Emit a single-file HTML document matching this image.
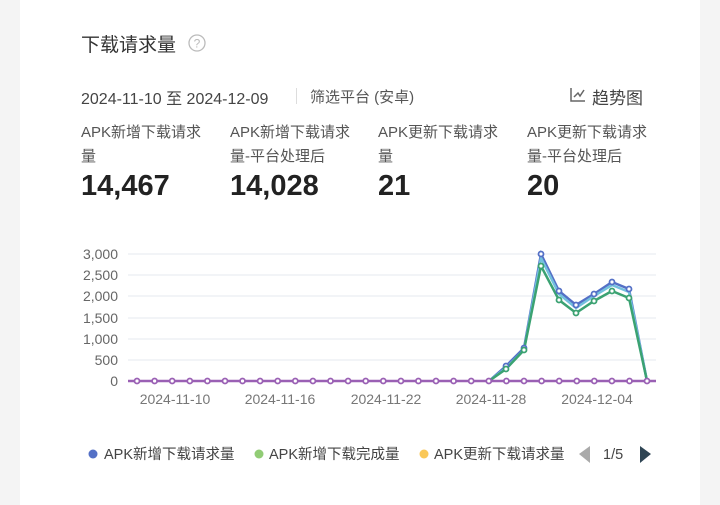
<!DOCTYPE html>
<html><head><meta charset="utf-8"><style>
body{margin:0;width:720px;height:505px;background:#f4f4f4;font-family:"Liberation Sans","Noto Sans CJK SC",sans-serif;overflow:hidden;position:relative}
.card{position:absolute;left:20px;top:0;width:680px;height:505px;background:#fff}
.t{position:absolute;white-space:nowrap}
</style></head><body>
<div class="card"></div>
<div class="t" style="left:81px;top:30px;font-size:19px;color:#333">下载请求量</div>
<svg class="t" style="left:187px;top:33px" width="20" height="20"><circle cx="10" cy="10" r="8" fill="none" stroke="#bbb" stroke-width="1.3"/><text x="10" y="14.5" font-size="12" text-anchor="middle" fill="#bbb" font-family="Liberation Sans">?</text></svg>
<div class="t" style="left:81px;top:85px;font-size:16px;color:#444">2024-11-10 至 2024-12-09</div>
<div class="t" style="left:296px;top:88px;width:1px;height:16px;background:#ddd"></div>
<div class="t" style="left:310px;top:86px;font-size:15px;color:#555">筛选平台 (安卓)</div>
<svg class="t" style="left:569px;top:86px" width="18" height="18"><path d="M2 2V15H16M5 11L9 7L11 10L15 4" fill="none" stroke="#666" stroke-width="1.5"/></svg>
<div class="t" style="left:592px;top:84px;font-size:17px;color:#444">趋势图</div>
<div class="t" style="left:81px;top:121px;font-size:15px;color:#555;line-height:24px">APK新增下载请求<br>量</div>
<div class="t" style="left:230px;top:121px;font-size:15px;color:#555;line-height:24px">APK新增下载请求<br>量-平台处理后</div>
<div class="t" style="left:378px;top:121px;font-size:15px;color:#555;line-height:24px">APK更新下载请求<br>量</div>
<div class="t" style="left:527px;top:121px;font-size:15px;color:#555;line-height:24px">APK更新下载请求<br>量-平台处理后</div>
<div class="t" style="left:81px;top:170px;font-size:29px;font-weight:bold;color:#222">14,467</div>
<div class="t" style="left:230px;top:170px;font-size:29px;font-weight:bold;color:#222">14,028</div>
<div class="t" style="left:378px;top:170px;font-size:29px;font-weight:bold;color:#222">21</div>
<div class="t" style="left:527px;top:170px;font-size:29px;font-weight:bold;color:#222">20</div>
<svg class="t" style="left:0;top:0" width="720" height="505" font-family="Liberation Sans" font-size="14">
<g stroke="#e6e8ef" stroke-width="1"><line x1="128" x2="656" y1="254" y2="254"/><line x1="128" x2="656" y1="275" y2="275"/><line x1="128" x2="656" y1="296" y2="296"/><line x1="128" x2="656" y1="318" y2="318"/><line x1="128" x2="656" y1="339" y2="339"/><line x1="128" x2="656" y1="360" y2="360"/></g>
<g fill="#666" text-anchor="end"><text x="118" y="259">3,000</text><text x="118" y="280">2,500</text><text x="118" y="301">2,000</text><text x="118" y="323">1,500</text><text x="118" y="344">1,000</text><text x="118" y="365">500</text><text x="118" y="386">0</text></g>
<g fill="#777" text-anchor="middle"><text x="175" y="404">2024-11-10</text><text x="280" y="404">2024-11-16</text><text x="386" y="404">2024-11-22</text><text x="491" y="404">2024-11-28</text><text x="597" y="404">2024-12-04</text></g>
<g fill="none" stroke-width="2.5">
<polyline stroke="#5470c6" points="489,381 506,366 524,348 541,254 559,291 576,305 594,294 612,282 629,289 647,381"/>
<polyline stroke="#73c0de" points="489,381 506,368 524,350 541,258 559,294 576,308 594,296 612,285 629,292 647,381"/>
<polyline stroke="#3ba272" points="489,381 506,369 524,350 541,266 559,300 576,313 594,301 612,291 629,298 647,381"/>
</g>
<g fill="#fff" stroke-width="1.8">
<g stroke="#5470c6"><circle cx="541" cy="254" r="2.5"/><circle cx="559" cy="291" r="2.5"/><circle cx="576" cy="305" r="2.5"/><circle cx="594" cy="294" r="2.5"/><circle cx="612" cy="282" r="2.5"/><circle cx="629" cy="289" r="2.5"/><circle cx="506" cy="366" r="2.5"/><circle cx="524" cy="348" r="2.5"/></g>
<g stroke="#3ba272"><circle cx="541" cy="266" r="2.5"/><circle cx="559" cy="300" r="2.5"/><circle cx="576" cy="313" r="2.5"/><circle cx="594" cy="301" r="2.5"/><circle cx="612" cy="291" r="2.5"/><circle cx="629" cy="298" r="2.5"/><circle cx="506" cy="369" r="2.5"/><circle cx="524" cy="350" r="2.5"/></g>
</g>
<line x1="128" x2="656" y1="381" y2="381" stroke="#9a60b4" stroke-width="2.5"/>
<g fill="#fff" stroke="#9a60b4" stroke-width="1.8">
<circle cx="137" cy="381" r="2.5"/><circle cx="154.6" cy="381" r="2.5"/><circle cx="172.2" cy="381" r="2.5"/><circle cx="189.8" cy="381" r="2.5"/><circle cx="207.4" cy="381" r="2.5"/><circle cx="225" cy="381" r="2.5"/><circle cx="242.5" cy="381" r="2.5"/><circle cx="260.1" cy="381" r="2.5"/><circle cx="277.7" cy="381" r="2.5"/><circle cx="295.3" cy="381" r="2.5"/><circle cx="312.9" cy="381" r="2.5"/><circle cx="330.5" cy="381" r="2.5"/><circle cx="348.1" cy="381" r="2.5"/><circle cx="365.7" cy="381" r="2.5"/><circle cx="383.3" cy="381" r="2.5"/><circle cx="400.9" cy="381" r="2.5"/><circle cx="418.4" cy="381" r="2.5"/><circle cx="436" cy="381" r="2.5"/><circle cx="453.6" cy="381" r="2.5"/><circle cx="471.2" cy="381" r="2.5"/><circle cx="488.8" cy="381" r="2.5"/><circle cx="506.4" cy="381" r="2.5"/><circle cx="524" cy="381" r="2.5"/><circle cx="541.6" cy="381" r="2.5"/><circle cx="559.2" cy="381" r="2.5"/><circle cx="576.8" cy="381" r="2.5"/><circle cx="594.3" cy="381" r="2.5"/><circle cx="611.9" cy="381" r="2.5"/><circle cx="629.5" cy="381" r="2.5"/><circle cx="647" cy="381" r="2.5"/>
</g>
<g font-size="14.5" fill="#444">
<circle cx="93" cy="454" r="4.5" fill="#5470c6"/><text x="104" y="459">APK新增下载请求量</text>
<circle cx="259" cy="454" r="4.5" fill="#91cc75"/><text x="269" y="459">APK新增下载完成量</text>
<circle cx="424" cy="454" r="4.5" fill="#fac858"/><text x="434" y="459">APK更新下载请求量</text>
<path d="M590 446L579 454L590 463Z" fill="#aaa"/>
<text x="603" y="459">1/5</text>
<path d="M640 446L651 454L640 463Z" fill="#2f4554"/>
</g>
</svg>
</body></html>
